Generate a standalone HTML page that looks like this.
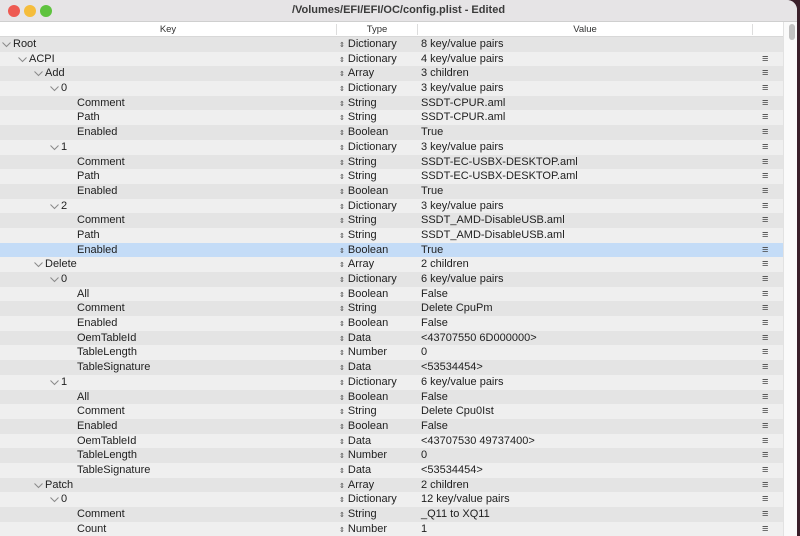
<!DOCTYPE html>
<html><head><style>
*{margin:0;padding:0;box-sizing:border-box}
body{width:800px;height:536px;background:#3a1f2a;overflow:hidden;font-family:"Liberation Sans",sans-serif;font-size:11px;color:#1e1e1e;position:relative}
.win{position:absolute;left:0;top:0;width:797px;height:536px;background:#ececec;border-radius:0 10px 0 0;overflow:hidden}
.title{height:22px;background:#e6e4e6;border-bottom:1px solid #cfcfcf;text-align:center;font-weight:bold;font-size:11px;line-height:20px;color:#3a3a3a;position:relative}
.dot{position:absolute;top:5px;width:12px;height:12px;border-radius:50%}
.hdr{position:absolute;top:22px;left:0;width:783px;height:15px;background:#fff;border-bottom:1px solid #d8d8d8;font-size:9.5px;line-height:15px;color:#333}
.hdr span{position:absolute;text-align:center}
.sep{position:absolute;top:2px;width:1px;height:11px;background:#ddd}
.sb{position:absolute;left:783px;top:22px;width:14px;height:514px;background:#fafafa;border-left:1px solid #e2e2e2}
.knob{position:absolute;left:5px;top:2px;width:6px;height:16px;border-radius:3px;background:#c2c2c2}
.rows{position:absolute;top:37px;left:0;width:783px}
.r{height:14.7px;line-height:14.7px;position:relative;white-space:nowrap}
.r:nth-child(odd){background:#e4e4e4}
.r:nth-child(even){background:#efefef}
.r.sel{background:#c4dcf7!important}
.k,.t,.v,.m,.c{position:absolute;top:0}
.c{top:5px}
.t{left:339px}.t::before{content:"⇕";font-size:7px;margin-right:3px;color:#444}
.v{left:421px}
.m{left:762px;font-size:11px;color:#444}
</style></head><body>
<div class="win">
<div class="title"><div class="dot" style="left:8px;background:#ee5a52"></div><div class="dot" style="left:24px;background:#f5bd3c"></div><div class="dot" style="left:40px;background:#5fc33f"></div>/Volumes/EFI/EFI/OC/config.plist - Edited</div>
<div class="hdr"><span style="left:0;width:336px">Key</span><div class="sep" style="left:336px"></div><span style="left:337px;width:80px">Type</span><div class="sep" style="left:417px"></div><span style="left:418px;width:334px">Value</span><div class="sep" style="left:752px"></div></div>
<div class="rows" id="rows"></div>
<div class="sb"><div class="knob"></div></div>
</div>
<script>
var d=[[0,1,"Root","Dictionary","8 key/value pairs",0],[1,1,"ACPI","Dictionary","4 key/value pairs"],[2,1,"Add","Array","3 children"],[3,1,"0","Dictionary","3 key/value pairs"],[4,0,"Comment","String","SSDT-CPUR.aml"],[4,0,"Path","String","SSDT-CPUR.aml"],[4,0,"Enabled","Boolean","True"],[3,1,"1","Dictionary","3 key/value pairs"],[4,0,"Comment","String","SSDT-EC-USBX-DESKTOP.aml"],[4,0,"Path","String","SSDT-EC-USBX-DESKTOP.aml"],[4,0,"Enabled","Boolean","True"],[3,1,"2","Dictionary","3 key/value pairs"],[4,0,"Comment","String","SSDT_AMD-DisableUSB.aml"],[4,0,"Path","String","SSDT_AMD-DisableUSB.aml"],[4,0,"Enabled","Boolean","True",1,1],[2,1,"Delete","Array","2 children"],[3,1,"0","Dictionary","6 key/value pairs"],[4,0,"All","Boolean","False"],[4,0,"Comment","String","Delete CpuPm"],[4,0,"Enabled","Boolean","False"],[4,0,"OemTableId","Data","<43707550 6D000000>"],[4,0,"TableLength","Number","0"],[4,0,"TableSignature","Data","<53534454>"],[3,1,"1","Dictionary","6 key/value pairs"],[4,0,"All","Boolean","False"],[4,0,"Comment","String","Delete Cpu0Ist"],[4,0,"Enabled","Boolean","False"],[4,0,"OemTableId","Data","<43707530 49737400>"],[4,0,"TableLength","Number","0"],[4,0,"TableSignature","Data","<53534454>"],[2,1,"Patch","Array","2 children"],[3,1,"0","Dictionary","12 key/value pairs"],[4,0,"Comment","String","_Q11 to XQ11"],[4,0,"Count","Number","1"]];
var h="";d.forEach(function(r){var x=13+r[0]*16;h+='<div class="r'+(r[6]?' sel':'')+'">'+(r[1]?'<svg class="c" style="left:'+(x-11)+'px" width="9" height="6"><polyline points="0.5,0.5 4.5,4.5 8.5,0.5" fill="none" stroke="#8a8a8a" stroke-width="1"/></svg>':'')+'<span class="k" style="left:'+x+'px">'+r[2]+'</span><span class="t">'+r[3]+'</span><span class="v">'+r[4].replace(/</g,"&lt;")+'</span>'+(r[5]===0?'':'<span class="m">≡</span>')+'</div>';});
document.getElementById("rows").innerHTML=h;
</script>
</body></html>
